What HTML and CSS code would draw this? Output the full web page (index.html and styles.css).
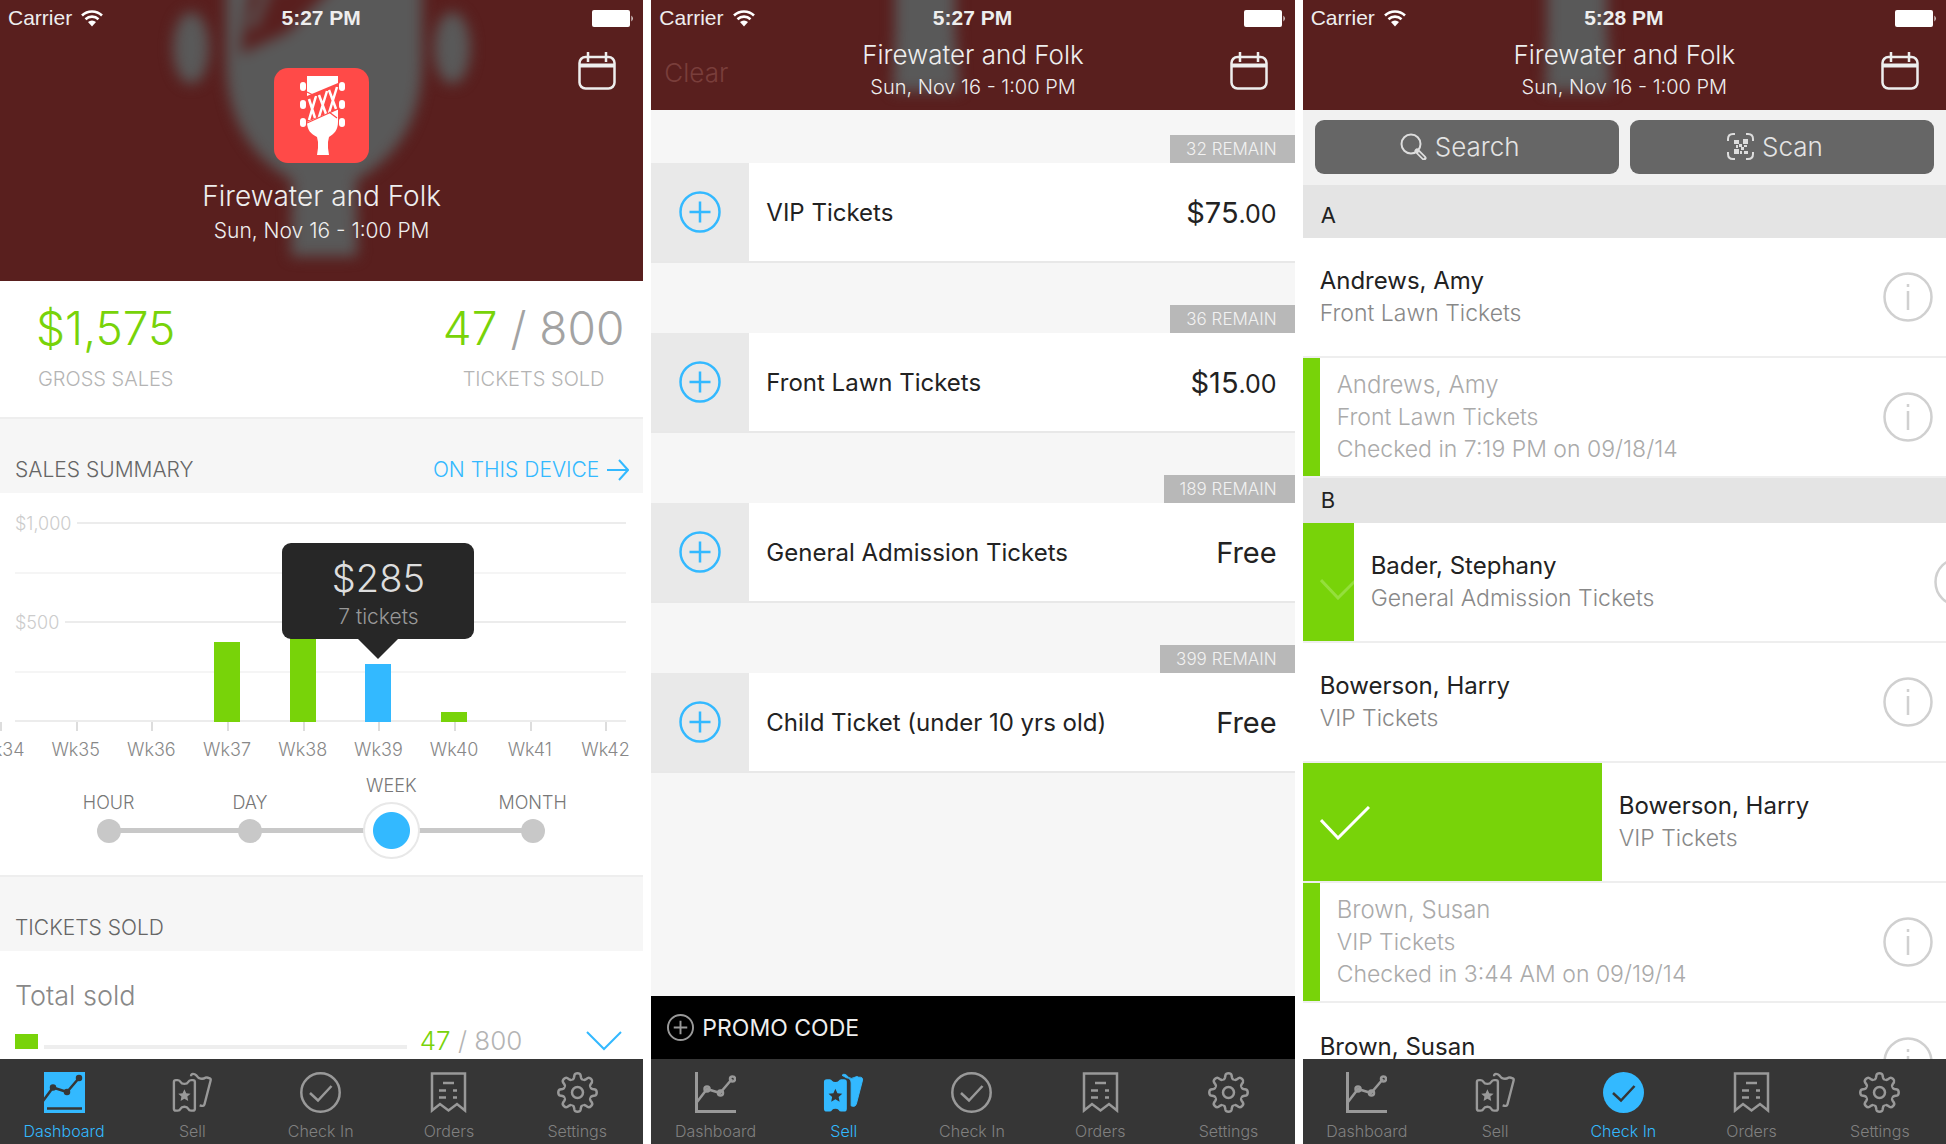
FILE: index.html
```html
<!DOCTYPE html>
<html lang="en">
<head>
<meta charset="utf-8">
<title>Firewater and Folk</title>
<link rel="stylesheet" href="styles.css">
</head>
<body>
<svg class="defs" aria-hidden="true">
  <symbol id="wifi" viewBox="0 0 22 18"><path d="M1 6.500a14.500 14.500 0 0 1 20 0M4.500 10.200a9.500 9.500 0 0 1 13 0" fill="none" stroke="#fff" stroke-width="2.600"/><path d="M7 13a6 6 0 0 1 8 0l-4 4.500z" fill="#fff"/></symbol>
  <symbol id="battery" viewBox="0 0 42 17"><rect width="38" height="17" rx="2" fill="#fff"/><path d="M39.500 5.500q2.500 3 0 6z" fill="#fff"/></symbol>
  <symbol id="calendar" viewBox="0 0 38 38"><path d="M1.500 13.500h35" stroke-width="4"/><rect x="1.500" y="5" width="35" height="31.500" rx="6" stroke-width="2.500"/><path d="M10 0v10M28 0v10" stroke-width="2.500"/></symbol>
  <symbol id="dash" viewBox="0 0 41 41"><path d="M1.500 0v39.500H41" stroke-width="3"/><path d="M2 30 12 17l13 4L37 7"/><circle cx="12" cy="17" r="2.500"/><circle cx="25.500" cy="21" r="2.500"/><circle cx="37.500" cy="7" r="2.500"/></symbol>
  <symbol id="dash-on" viewBox="0 0 41 41"><path d="M0 0h41v41H0z" fill="#33b9ff" stroke="none"/><g stroke="#363636" fill="#363636"><path d="M-1 29 9 15.500l14 4.500L35 6M3 36.500h35" fill="none" stroke-width="2.500"/><circle cx="9" cy="15.500" r="2"/><circle cx="23" cy="20" r="2"/><circle cx="35" cy="6" r="2"/></g></symbol>
  <symbol id="sell" viewBox="0 0 43 42"><path d="M2 10a2 2 0 0 1 2-2h2q2 0 3 2t4 2 4-2 3-2h2a2 2 0 0 1 2 2v28a2 2 0 0 1-2 2h-2q-2 0-3-2t-4-2-4 2-3 2H4a2 2 0 0 1-2-2z"/><path d="M20 4q0-2.500 2-2.500 2 0 3.500 1.500 2 3 4.500 3.500 3 .5 5-1 2-.8 4 .5 2 .5 1.500 2.500l-6.500 25q-.5 2.500-5 1"/><path d="m13 17.500 1.900 4.200 4.600.5-3.400 3.100.9 4.500-4-2.300-4 2.300.9-4.500-3.400-3.100 4.600-.5z" fill="#999" stroke="none"/></symbol>
  <symbol id="sell-on" viewBox="0 0 43 42"><path d="M2 10a2 2 0 0 1 2-2h3q1 0 2 1.500t4 1.500 4-1.500 2-1.500h3a2 2 0 0 1 2 2v28a2 2 0 0 1-2 2h-3q-1 0-2-1.500t-4-1.500-4 1.500-2 1.500H4a2 2 0 0 1-2-2z" fill="#33b9ff" stroke="#33b9ff" stroke-width="2"/><path d="m13 17 2.100 4.700 5.100.6-3.800 3.400 1 5-4.400-2.600-4.400 2.600 1-5-3.800-3.400 5.100-.6z" fill="#363636" stroke="none"/><path d="M20 3q1-1.500 3-1 2 .5 3.500 3 3 2.500 7 0 2-1.500 4 0 4.500-.5 4 3l-6.500 25q-1 3-3.500 2.500l-2-.5V11q0-5-5-5.500z" fill="#33b9ff" stroke="#33b9ff" stroke-width="1"/></symbol>
  <symbol id="check" viewBox="0 0 41 41"><circle cx="20.500" cy="20.500" r="19.200"/><path d="m10 21 8 7.500L31.500 14"/></symbol>
  <symbol id="check-on" viewBox="0 0 41 41"><circle cx="20.500" cy="20.500" r="20.500" fill="#33b9ff" stroke="none"/><path d="m10 21 8 7.500L31.500 14" stroke="#363636"/></symbol>
  <symbol id="orders" viewBox="0 0 41 41"><path d="M4 1.500h33v37l-8-6.500-8.500 6.500L12 32l-8 6.500zM15 11h11M11 18.500h7M25 18.500h4M11 25.500h7M25 25.500h4"/></symbol>
  <symbol id="gear" viewBox="-20.500 -20.500 41 41">
    <g id="quarter"><path id="tooth" d="M-5.500-13.400Q-4-13-3.500-15L-3-17.500Q-2.500-19.200 0-19.200T3-17.500L3.500-15Q4-13 5.500-13.400"/><use href="#tooth" transform="rotate(45)"/></g>
    <use href="#quarter" transform="rotate(90)"/><use href="#quarter" transform="rotate(180)"/><use href="#quarter" transform="rotate(270)"/><circle r="5.500"/>
  </symbol>
  <symbol id="plus" viewBox="0 0 42 42"><circle cx="21" cy="21" r="19.500"/><path d="M21 10.500v21M10.500 21h21"/></symbol>
  <symbol id="info" viewBox="0 0 50 50"><circle cx="25" cy="25" r="23.500"/><path d="M25 19v19M25 12v3"/></symbol>
</svg>

<main class="screens">
  <section class="screen" aria-label="Dashboard">
    <header class="top top-tall">
      <svg class="art" viewBox="0 0 643 281" preserveAspectRatio="xMidYMin slice" aria-hidden="true">
        <g class="soft" fill="#595959"><path d="M226-20h196v80c0 65-30 100-66 120l1 76h-66l1-76c-36-20-66-55-66-120z"/><ellipse cx="191" cy="48" rx="18" ry="36"/><ellipse cx="452" cy="48" rx="18" ry="36"/><path d="m250-10 90-10-52 52-48 22z" fill="#591f1e"/><path d="M267-10 252 28" stroke="#595959" stroke-width="8"/></g>
      </svg>
      <div class="status"><span class="carrier">Carrier <svg width="22" height="18"><use href="#wifi"/></svg></span><b>5:27 PM</b><svg class="batt" width="42" height="19"><use href="#battery"/></svg></div>
      <div class="bar">
        <div class="event">
          <svg class="logo" viewBox="0 0 95 95" aria-label="Firewater and Folk">
            <rect width="95" height="95" rx="14" fill="#ff4a48"/>
            <path d="M33 8h31v46c0 8-4 12-9 15l-1 5v6l1 7H43l1-7v-6l-1-5c-6-3-10-7-10-15z" fill="#fff"/>
            <g fill="#fff"><rect x="26" y="14" width="6" height="9" rx="3"/><rect x="26" y="32" width="6" height="9" rx="3"/><rect x="26" y="50" width="6" height="9" rx="3"/><rect x="65" y="14" width="6" height="9" rx="3"/><rect x="65" y="32" width="6" height="9" rx="3"/><rect x="65" y="50" width="6" height="9" rx="3"/></g>
            <path d="m33 28 31-13v26L33 54z" fill="#ff4a48"/>
            <path d="m35 31 6 19M42 28l-7 24M45 27l7 19M53 23l-8 26M55 22l7 19M63 19l-8 26" stroke="#fff" stroke-width="2.500"/>
            <path d="m33 24 8 4M55 44l8 6M33 55l31-14" stroke="#ff4a48" stroke-width="1.200"/>
          </svg>
          <h1>Firewater and Folk</h1><p>Sun, Nov 16 - 1:00 PM</p>
        </div>
        <button class="cal" aria-label="Calendar"><svg width="38" height="38"><use href="#calendar"/></svg></button>
      </div>
    </header>
    <div class="body white">
      <div class="stats">
        <div><strong class="green">$1,575</strong><span>GROSS SALES</span></div>
        <div><strong><b class="green">47</b> / 800</strong><span>TICKETS SOLD</span></div>
      </div>
      <div class="head"><h2>SALES SUMMARY</h2><a href="#device">ON THIS DEVICE <svg width="22" height="22" viewBox="0 0 22 22"><path d="M0 11h20M12 1l9 10-9 10"/></svg></a></div>
      <div class="chart">
        <div class="plot">
          <div class="lines"><div>$1,000<i></i></div><div class="faint"><i></i></div><div>$500<i></i></div><div class="faint"><i></i></div><div><i></i></div></div>
          <div class="weeks">
            <div><div class="track"></div>Wk34</div>
            <div><div class="track"></div>Wk35</div>
            <div><div class="track"></div>Wk36</div>
            <div><div class="track"><span style="height:40%"></span></div>Wk37</div>
            <div><div class="track"><span style="height:50%"></span></div>Wk38</div>
            <div><div class="track"><span class="now" style="height:29%"></span><div class="tip"><strong>$285</strong>7 tickets</div></div>Wk39</div>
            <div><div class="track"><span style="height:5%"></span></div>Wk40</div>
            <div><div class="track"></div>Wk41</div>
            <div><div class="track"></div>Wk42</div>
          </div>
        </div>
        <div class="range" role="radiogroup" aria-label="Period">
          <label>HOUR<input type="radio" name="range"></label>
          <label>DAY<input type="radio" name="range"></label>
          <label>WEEK<input type="radio" name="range" checked></label>
          <label>MONTH<input type="radio" name="range"></label>
        </div>
      </div>
      <div class="head"><h2>TICKETS SOLD</h2></div>
      <div class="total">
        <h3>Total sold</h3>
        <div class="sold"><div class="done"></div><div class="rest"></div><span class="count"><b class="green">47</b> / 800</span><button class="more" aria-label="Show tickets"><svg width="36" height="20" viewBox="0 0 36 20"><path d="m1 1 17 17L35 1"/></svg></button></div>
      </div>
    </div>
    <nav class="tabs">
      <a class="on" href="#dashboard"><svg><use href="#dash-on"/></svg>Dashboard</a>
      <a href="#sell"><svg><use href="#sell"/></svg>Sell</a>
      <a href="#checkin"><svg><use href="#check"/></svg>Check In</a>
      <a href="#orders"><svg><use href="#orders"/></svg>Orders</a>
      <a href="#settings"><svg><use href="#gear"/></svg>Settings</a>
    </nav>
  </section>

  <section class="screen" aria-label="Sell">
    <header class="top">
      <svg class="art" viewBox="0 0 643 110" preserveAspectRatio="xMidYMin slice" aria-hidden="true"><path class="soft" d="M244-30h60V30l4 61h-66l2-61z" fill="#595959"/></svg>
      <div class="status"><span class="carrier">Carrier <svg width="22" height="18"><use href="#wifi"/></svg></span><b>5:27 PM</b><svg class="batt" width="42" height="19"><use href="#battery"/></svg></div>
      <div class="bar"><button class="clear" disabled>Clear</button><div class="event"><h1>Firewater and Folk</h1><p>Sun, Nov 16 - 1:00 PM</p></div><button class="cal" aria-label="Calendar"><svg width="38" height="38"><use href="#calendar"/></svg></button></div>
    </header>
    <div class="body tickets">
      <div class="ticket"><span class="remain">32 REMAIN</span><div class="line"><button aria-label="Add VIP Tickets"><svg><use href="#plus"/></svg></button><h2>VIP Tickets</h2><p>$75<small>.00</small></p></div></div>
      <div class="ticket"><span class="remain">36 REMAIN</span><div class="line"><button aria-label="Add Front Lawn Tickets"><svg><use href="#plus"/></svg></button><h2>Front Lawn Tickets</h2><p>$15<small>.00</small></p></div></div>
      <div class="ticket"><span class="remain">189 REMAIN</span><div class="line"><button aria-label="Add General Admission Tickets"><svg><use href="#plus"/></svg></button><h2>General Admission Tickets</h2><p>Free</p></div></div>
      <div class="ticket"><span class="remain">399 REMAIN</span><div class="line"><button aria-label="Add Child Ticket"><svg><use href="#plus"/></svg></button><h2>Child Ticket (under 10 yrs old)</h2><p>Free</p></div></div>
    </div>
    <button class="promo"><svg><use href="#plus"/></svg>PROMO CODE</button>
    <nav class="tabs">
      <a href="#dashboard"><svg><use href="#dash"/></svg>Dashboard</a>
      <a class="on" href="#sell"><svg><use href="#sell-on"/></svg>Sell</a>
      <a href="#checkin"><svg><use href="#check"/></svg>Check In</a>
      <a href="#orders"><svg><use href="#orders"/></svg>Orders</a>
      <a href="#settings"><svg><use href="#gear"/></svg>Settings</a>
    </nav>
  </section>

  <section class="screen" aria-label="Check In">
    <header class="top">
      <svg class="art" viewBox="0 0 643 110" preserveAspectRatio="xMidYMin slice" aria-hidden="true"><path class="soft" d="M244-30h60V30l4 61h-66l2-61z" fill="#595959"/></svg>
      <div class="status"><span class="carrier">Carrier <svg width="22" height="18"><use href="#wifi"/></svg></span><b>5:28 PM</b><svg class="batt" width="42" height="19"><use href="#battery"/></svg></div>
      <div class="bar"><div class="event"><h1>Firewater and Folk</h1><p>Sun, Nov 16 - 1:00 PM</p></div><button class="cal" aria-label="Calendar"><svg width="38" height="38"><use href="#calendar"/></svg></button></div>
    </header>
    <div class="body white">
      <div class="tools">
        <button><svg width="27" height="27" viewBox="0 0 27 27"><circle cx="11" cy="11" r="9.500"/><path d="m17 18 7 7" stroke-width="5" stroke-linecap="round"/><path d="m18.500 19.500 5.500 5.500" stroke="#666" stroke-width="1.500"/></svg>Search</button>
        <button><svg width="27" height="27" viewBox="0 0 27 27"><path d="M1 8V6q0-5 5-5h2M19 1h2q5 0 5 5v2M26 19v2q0 5-5 5h-2M8 26H6q-5 0-5-5v-2"/><path d="M7 7h5v4H7zM16 6h5v5h-5zM7 16h5v5H7zM12 11h3v3h-3zM14 14h3v3h-3zM17 12h3v2h-3zM9 12h2v3H9zM17 18h4v3h-4zM13 18h2v3h-2z" fill="#ddd" stroke="none"/></svg>Scan</button>
      </div>
      <h2 class="letter first">A</h2>
      <div class="guest"><div class="who"><h3>Andrews, Amy</h3><p>Front Lawn Tickets</p></div><button class="info" aria-label="Details"><svg><use href="#info"/></svg></button></div>
      <div class="guest in"><div class="swipe"></div><div class="who"><h3>Andrews, Amy</h3><p>Front Lawn Tickets</p><p>Checked in 7:19 PM on 09/18/14</p></div><button class="info" aria-label="Details"><svg><use href="#info"/></svg></button></div>
      <h2 class="letter">B</h2>
      <div class="guest"><div class="swipe part"><svg width="50" height="34" viewBox="0 0 50 34"><path d="m1 14 17 18L49 1"/></svg></div><div class="who"><h3>Bader, Stephany</h3><p>General Admission Tickets</p></div><button class="info" aria-label="Details"><svg><use href="#info"/></svg></button></div>
      <div class="guest"><div class="who"><h3>Bowerson, Harry</h3><p>VIP Tickets</p></div><button class="info" aria-label="Details"><svg><use href="#info"/></svg></button></div>
      <div class="guest"><div class="swipe full"><svg width="50" height="34" viewBox="0 0 50 34"><path d="m1 14 17 18L49 1"/></svg></div><div class="who"><h3>Bowerson, Harry</h3><p>VIP Tickets</p></div></div>
      <div class="guest in"><div class="swipe"></div><div class="who"><h3>Brown, Susan</h3><p>VIP Tickets</p><p>Checked in 3:44 AM on 09/19/14</p></div><button class="info" aria-label="Details"><svg><use href="#info"/></svg></button></div>
      <div class="guest"><div class="who"><h3>Brown, Susan</h3></div><button class="info" aria-label="Details"><svg><use href="#info"/></svg></button></div>
    </div>
    <nav class="tabs">
      <a href="#dashboard"><svg><use href="#dash"/></svg>Dashboard</a>
      <a href="#sell"><svg><use href="#sell"/></svg>Sell</a>
      <a class="on" href="#checkin"><svg><use href="#check-on"/></svg>Check In</a>
      <a href="#orders"><svg><use href="#orders"/></svg>Orders</a>
      <a href="#settings"><svg><use href="#gear"/></svg>Settings</a>
    </nav>
  </section>
</main>
</body>
</html>
```
FILE: styles.css
```css
* { box-sizing: border-box; }
body, h1, h2, h3, p { margin: 0; font-weight: inherit; font-size: inherit; }
body { font-family: Inter, sans-serif; font-weight: 300; color: #222; background: #fff; }
button { border: 0; padding: 0; margin: 0; background: none; font: inherit; color: inherit; }
a { text-decoration: none; color: inherit; }
svg { display: block; fill: none; flex: none; }
b { font-weight: inherit; }
.defs { position: absolute; width: 0; height: 0; }
.green, .stats .green { color: #78d309; }

.screens { display: grid; grid-template-columns: repeat(3, minmax(0, 1fr)); gap: 8px; height: 100vh; }
.screen { display: flex; flex-direction: column; min-height: 0; overflow: hidden; }
.body { flex: 1; min-height: 0; overflow: hidden; background: #f6f6f6; }
.white { background: #fff; }

/* Header */
.top { position: relative; flex: none; overflow: hidden; background: #591f1e; color: #eee; padding-bottom: 10px; }
.top-tall { padding-bottom: 36px; }
.art { position: absolute; inset: 0; width: 100%; height: 100%; }
.soft { filter: blur(7px); }
.status { position: relative; display: grid; grid-template-columns: 1fr auto 1fr; align-items: center; height: 36px; padding: 0 9px 0 8px; font: 21px/36px "Liberation Sans", sans-serif; }
.status b { font-weight: 700; font-size: 21px; }
.carrier { display: flex; align-items: center; gap: 9px; }
.batt { justify-self: end; }
.bar { position: relative; display: grid; grid-template-columns: 1fr auto 1fr; align-items: start; }
.event { grid-column: 2; grid-row: 1; text-align: center; }
.event h1 { font-size: 26px; line-height: 32px; margin-top: 3px; }
.event p { font-size: 20px; line-height: 26px; margin-top: 3px; }
.top-tall h1 { font-size: 28px; line-height: 34px; margin-top: 16px; }
.top-tall p { font-size: 21px; line-height: 28px; margin-top: 4px; }
.logo { width: 95px; height: 95px; margin: 32px auto 0; }
.cal { grid-column: 3; grid-row: 1; justify-self: end; margin: 16px 27px 0 0; stroke: #eee; }
.clear { grid-column: 1; grid-row: 1; justify-self: start; margin: 20px 0 0 13px; font-size: 26px; line-height: 34px; color: #793e3b; }

/* Dashboard */
.stats { display: flex; justify-content: space-between; padding: 20px 19px 25px 36px; color: #a3a3a3; text-align: center; }
.stats strong { display: block; font-weight: 300; font-size: 46px; line-height: 54px; }
.stats span { display: block; margin-top: 12px; font-size: 20px; line-height: 25px; color: #b4b4b4; }
.head { display: flex; justify-content: space-between; border-top: 2px solid #eee; background: #f6f6f6; padding: 38px 14px 10px 15px; font-size: 21px; line-height: 26px; color: #666; }
.head a { display: flex; align-items: center; gap: 8px; color: #33b9ff; }
.head svg { stroke: #33b9ff; stroke-width: 2; }
.chart { padding: 0 0 16px; }
.plot { position: relative; overflow: hidden; padding-top: 29px; }
.lines { position: absolute; inset: 29px 17px auto 15px; height: 200px; display: flex; flex-direction: column; justify-content: space-between; font-size: 18px; color: #ccc; }
.lines div { display: flex; align-items: center; gap: 6px; height: 2px; }
.lines i { flex: 1; height: 2px; background: #ececec; }
.lines .faint i { background: #f5f5f5; }
.weeks { position: relative; display: grid; grid-template-columns: repeat(9, 1fr); width: calc(100% * 18 / 17); margin-left: calc(-100% / 17); font-size: 18px; line-height: 22px; color: #888; text-align: center; }
.track { position: relative; display: flex; align-items: end; justify-content: center; height: 200px; margin-bottom: 17px; }
.track::after { content: ""; position: absolute; top: 100%; left: 50%; width: 2px; height: 9px; background: #ddd; }
.track span { width: 26px; background: #78d309; }
.track .now { background: #33b9ff; }
.tip { position: absolute; z-index: 1; bottom: 83px; left: 50%; margin-left: -96px; width: 192px; height: 96px; padding-top: 12px; border-radius: 9px; background: #272727; color: #999; font-size: 21px; line-height: 32px; }
.tip strong { display: block; font-weight: 300; font-size: 38px; line-height: 46px; color: #ddd; }
.tip::after { content: ""; position: absolute; top: 100%; left: 50%; margin-left: -20px; border: 20px solid transparent; border-top-color: #272727; border-bottom: 0; }
.range { position: relative; display: grid; grid-template-columns: repeat(4, 1fr); align-items: end; margin-top: 14px; padding: 0 40px 0 38px; font-size: 18px; line-height: 22px; color: #777; }
.range::before { content: ""; position: absolute; left: 110px; right: 110px; bottom: 26px; height: 5px; background: #c8c8c8; }
.range label { position: relative; display: flex; flex-direction: column; align-items: center; gap: 5px; }
.range input { appearance: none; margin: 0 0 16px; width: 24px; height: 24px; border-radius: 50%; background: #c8c8c8; }
.range input:checked { margin: 0; width: 57px; height: 57px; border: 2px solid #e8e8e8; background: radial-gradient(circle, #33b9ff 18px, #fff 19px); }
.total { padding: 28px 21px 0 15px; color: #888; font-size: 27px; line-height: 34px; }
.sold { display: flex; align-items: end; margin-top: 11px; }
.done { width: 23px; height: 15px; margin: 0 6px 9px 0; background: #78d309; }
.rest { flex: 1; height: 4px; margin: 0 13px 9px 0; background: #eee; }
.count { color: #b4b4b4; font-size: 26px; }
.more { margin: 0 0 7px 64px; stroke: #33b9ff; stroke-width: 2; }

/* Sell */
.tickets { padding-top: 25px; }
.ticket { display: flex; flex-direction: column; margin-bottom: 42px; }
.remain { align-self: end; padding: 0 18px 0 16px; background: #b8b8b8; color: #f2f2f2; font-size: 17px; line-height: 28px; }
.line { display: grid; grid-template-columns: 98px 1fr auto; align-items: center; height: 100px; background: #fff; border-bottom: 2px solid #e8e8e8; }
.line button { display: grid; place-items: center; height: 98px; background: #e9e9e9; }
.line svg { width: 42px; height: 42px; stroke: #33b9ff; stroke-width: 2.5; }
.line h2 { padding-left: 17px; font-size: 24px; font-weight: 400; }
.line p { padding-right: 18px; font-size: 29px; font-weight: 400; }
.line small { font-size: 25px; }
.promo { flex: none; display: flex; align-items: center; gap: 8px; height: 63px; padding-left: 16px; background: #000; color: #eee; font-size: 23px; font-weight: 400; }
.promo svg { width: 27px; height: 27px; stroke: #999; stroke-width: 3; }

/* Check in */
.tools { display: grid; grid-template-columns: 1fr 1fr; gap: 11px; padding: 10px 12px 11px; background: #f1f1f1; }
.tools button { display: flex; align-items: center; justify-content: center; gap: 8px; height: 54px; padding: 0 14px 2px 0; border-radius: 9px; background: #666; color: #e4e4e4; font-size: 26px; }
.tools svg { stroke: #ddd; stroke-width: 2; }
.letter { padding: 0 18px; background: #e4e4e4; font-size: 22px; font-weight: 400; line-height: 45px; }
.first { padding-top: 8px; }
.guest { display: flex; align-items: center; height: 120px; border-bottom: 2px solid #eee; overflow: hidden; font-size: 23px; line-height: 32px; color: #888; }
.guest:last-child { align-items: start; padding-top: 28px; }
.guest:last-child .info { margin-top: 6px; }
.guest h3 { color: #222; font-size: 24px; font-weight: 400; }
.guest.in, .in h3 { color: #aaa; }
.in h3 { font-weight: 300; }
.swipe { flex: none; align-self: stretch; width: 17px; background: #78d309; padding: 43px 0 0 17px; overflow: hidden; stroke: #fff; stroke-width: 3; }
.part { width: 51px; stroke: #94df3c; }
.full { width: 46.5%; }
.who { flex: none; width: calc(100% - 63px); padding-left: 17px; }
.in .who { width: calc(100% - 80px); }
.info svg { width: 50px; height: 50px; stroke: #d0d0d0; stroke-width: 2.5; }

/* Tab bar */
.tabs { flex: none; display: grid; grid-template-columns: repeat(5, 1fr); height: 85px; padding: 13px 2px 0 0; background: #363636; color: #808080; font-size: 16px; line-height: 20px; text-align: center; }
.tabs a { display: flex; flex-direction: column; align-items: center; gap: 8px; }
.tabs svg { width: 41px; height: 41px; stroke: #999; stroke-width: 2.5; overflow: hidden; }
.tabs .on { color: #33b9ff; }
```
